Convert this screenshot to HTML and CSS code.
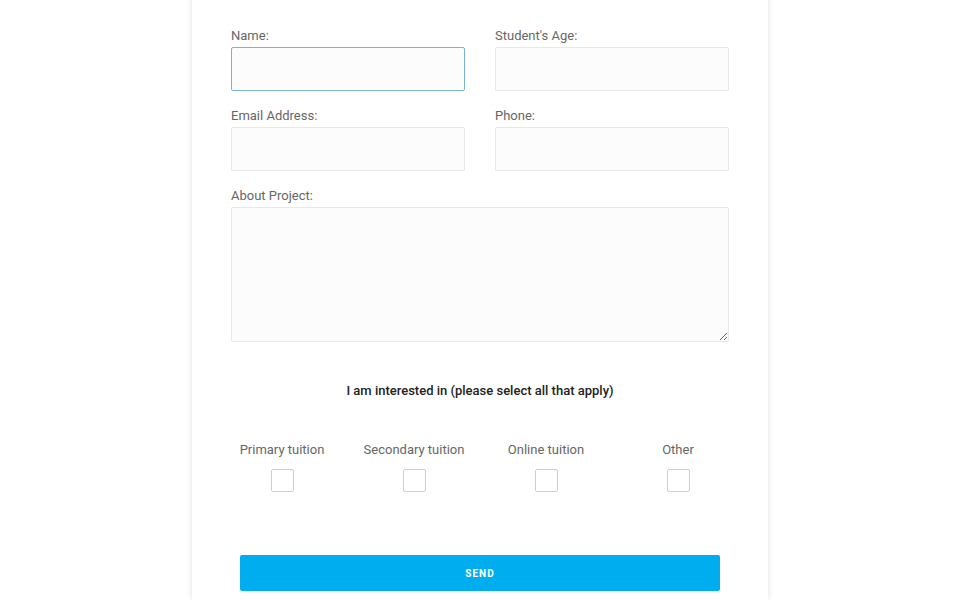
FILE: index.html
```html
<!DOCTYPE html>
<html lang="en">
<head>
    <meta charset="UTF-8">
    <meta name="viewport" content="width=device-width, initial-scale=1.0">
    <title>Contact Us</title>
    <link rel="stylesheet" href="styles.css">
</head>
<body>
    <!-- Enquiry Form Card -->
    <div class="card">
        <form class="enquiry-form">
            <div class="row">
                <div class="field">
                    <label for="name">Name:</label>
                    <input type="text" id="name" class="input active">
                </div>
                <div class="field">
                    <label for="age">Student's Age:</label>
                    <input type="text" id="age" class="input">
                </div>
            </div>

            <div class="row">
                <div class="field">
                    <label for="email">Email Address:</label>
                    <input type="email" id="email" class="input">
                </div>
                <div class="field">
                    <label for="phone">Phone:</label>
                    <input type="tel" id="phone" class="input">
                </div>
            </div>

            <div class="field">
                <label for="about">About Project:</label>
                <textarea id="about" class="input textarea"></textarea>
            </div>

            <!-- Interests -->
            <p class="interest-title">I am interested in (please select all that apply)</p>

            <div class="options">
                <label class="option">
                    <span>Primary tuition</span>
                    <input type="checkbox" class="check">
                </label>
                <label class="option">
                    <span>Secondary tuition</span>
                    <input type="checkbox" class="check">
                </label>
                <label class="option">
                    <span>Online tuition</span>
                    <input type="checkbox" class="check">
                </label>
                <label class="option">
                    <span>Other</span>
                    <input type="checkbox" class="check">
                </label>
            </div>

            <button type="button" class="send-btn">SEND</button>
        </form>
    </div>
</body>
</html>
```

FILE: styles.css
```css
/* General Styling */
* {
    box-sizing: border-box;
    margin: 0;
    padding: 0;
    font-family: Roboto, "Liberation Sans", Arial, sans-serif;
}

body {
    background-color: #ffffff;
    color: #666666;
}

/* Card */
.card {
    width: 576px;
    margin: -10px auto 0;
    padding: 37px 39px 9px;
    background-color: #ffffff;
    box-shadow: 0 0 6px rgba(0, 0, 0, 0.12);
}

/* Form Fields */
.row {
    display: flex;
    gap: 30px;
}

.row .field {
    flex: 1;
}

.field {
    margin-bottom: 16px;
}

.field label {
    display: block;
    font-size: 13px;
    line-height: 17px;
    color: #666666;
    margin-bottom: 3px;
}

.input {
    display: block;
    width: 100%;
    height: 44px;
    background-color: #fcfcfc;
    border: 1px solid #e9e9e9;
    border-radius: 2px;
    outline: none;
    font-size: 13px;
    color: #555555;
    padding: 0 12px;
}

.input.active {
    border-color: #7ab4d4;
}

.textarea {
    height: 135px;
    padding: 10px 12px;
    resize: vertical;
}

/* Interests */
.interest-title {
    margin-top: 40px;
    font-size: 13px;
    line-height: 18px;
    font-weight: 500;
    color: #222222;
    text-align: center;
}

.options {
    display: grid;
    grid-template-columns: repeat(4, 1fr);
    margin: 42px -15px 0;
}

.option {
    display: flex;
    flex-direction: column;
    align-items: center;
    font-size: 13px;
    line-height: 16px;
    color: #666666;
}

.option span {
    margin-bottom: 11px;
}

.check {
    appearance: none;
    width: 23px;
    height: 23px;
    border: 1px solid #cfcfcf;
    border-radius: 2px;
    background-color: #ffffff;
    cursor: pointer;
}

.check:checked {
    background-color: #00aeef;
    border-color: #00aeef;
}

/* Button */
.send-btn {
    display: block;
    width: 480px;
    height: 36px;
    margin: 63px auto 0;
    background-color: #00aeef;
    color: #ffffff;
    border: none;
    border-radius: 2px;
    font-size: 10px;
    font-weight: 700;
    letter-spacing: 1px;
    cursor: pointer;
}

.send-btn:hover {
    background-color: #0099d4;
}
```
